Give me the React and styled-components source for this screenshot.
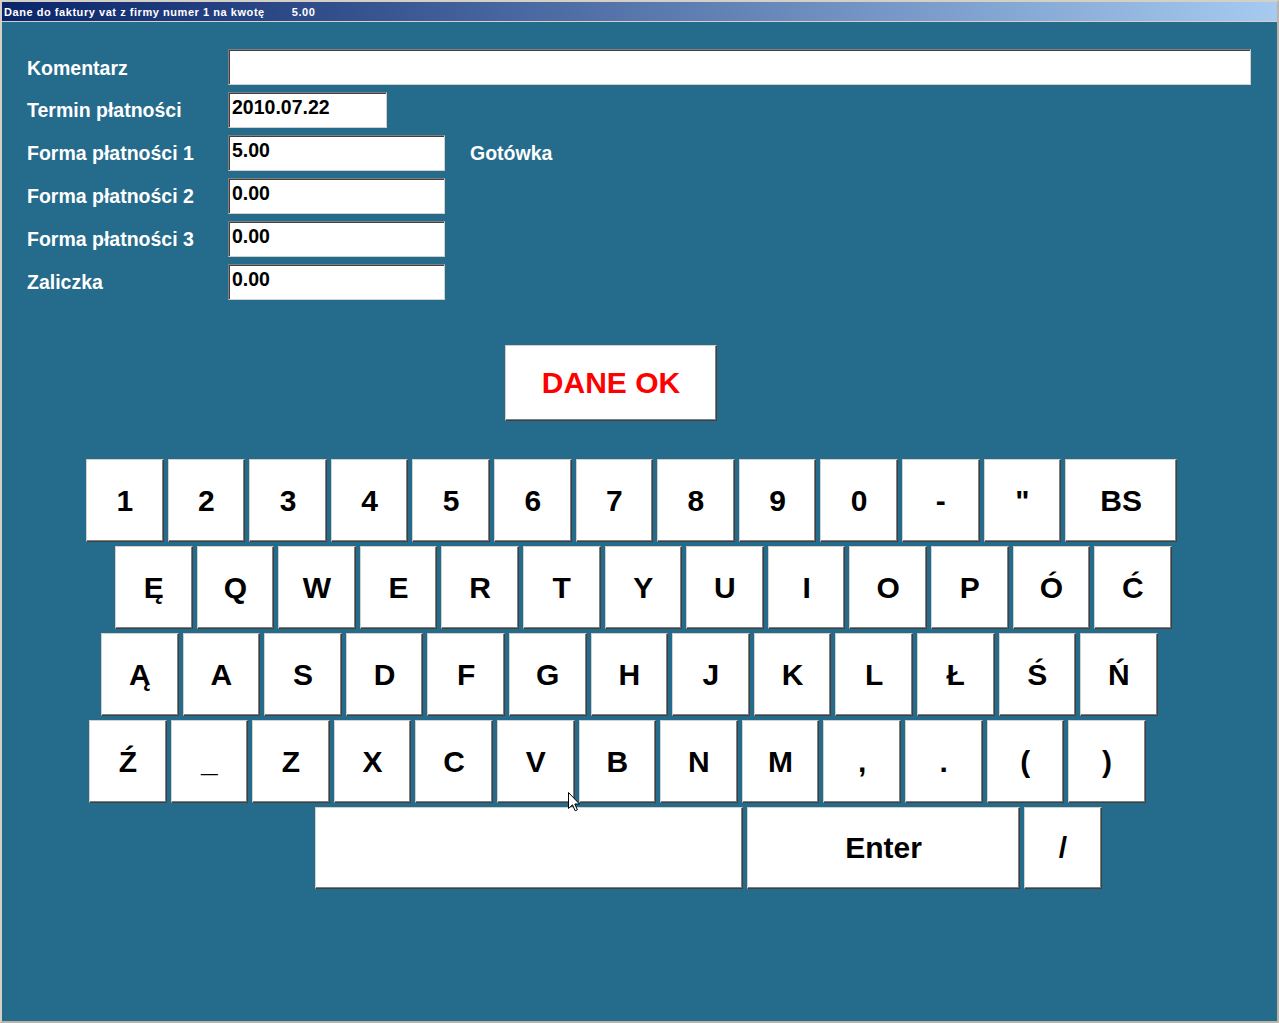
import React from 'react'
import styled, { createGlobalStyle } from 'styled-components'

const GlobalStyle = createGlobalStyle`
  html, body {
    margin: 0;
    padding: 0;
    background: #246b8c;
  }
  * {
    box-sizing: border-box;
  }
`

const rows = [
  { indent: 84, keys: ['1', '2', '3', '4', '5', '6', '7', '8', '9', '0', '-', '"', { label: 'BS', w: 112 }] },
  { indent: 113, keys: ['Ę', 'Q', 'W', 'E', 'R', 'T', 'Y', 'U', 'I', 'O', 'P', 'Ó', 'Ć'] },
  { indent: 99, keys: ['Ą', 'A', 'S', 'D', 'F', 'G', 'H', 'J', 'K', 'L', 'Ł', 'Ś', 'Ń'] },
  { indent: 87, keys: ['Ź', '_', 'Z', 'X', 'C', 'V', 'B', 'N', 'M', ',', '.', '(', ')'] },
  { indent: 313, h: 82, keys: [{ label: '', w: 428 }, { label: 'Enter', w: 273 }, '/'] },
]

const fields = [
  { label: 'Komentarz', value: '', w: 1023, drop: 3 },
  { label: 'Termin płatności', value: '2010.07.22', w: 159 },
  { label: 'Forma płatności 1', value: '5.00', w: 217, note: 'Gotówka' },
  { label: 'Forma płatności 2', value: '0.00', w: 217 },
  { label: 'Forma płatności 3', value: '0.00', w: 217 },
  { label: 'Zaliczka', value: '0.00', w: 217 },
]

function App() {
  return (
    <Window>
      <GlobalStyle />
      <TitleBar>
        <span>Dane do faktury vat z firmy numer 1 na kwotę</span>
        <TitleAmount>5.00</TitleAmount>
      </TitleBar>

      <Content>
        <Form>
          {fields.map((f) => (
            <FormRow key={f.label}>
              <Label $drop={f.drop || 0}>{f.label}</Label>
              <Field $w={f.w}>{f.value}</Field>
              {f.note && <Note>{f.note}</Note>}
            </FormRow>
          ))}
        </Form>

        <OkButton>DANE OK</OkButton>

        <Keyboard>
          {rows.map((row, i) => (
            <KeyRow key={i} $indent={row.indent}>
              {row.keys.map((k, j) => {
                const label = typeof k === 'string' ? k : k.label
                const w = typeof k === 'string' ? 77.6 : k.w
                return (
                  <Key key={j} $w={w} $h={row.h || 83}>
                    {label}
                  </Key>
                )
              })}
            </KeyRow>
          ))}
        </Keyboard>
      </Content>

      <Pointer width="12" height="20" viewBox="0 0 12 20">
        <path
          d="M0.5 0.5 L0.5 16.5 L4.5 12.8 L7.2 18.8 L9.4 17.8 L6.8 12 L11.5 12 Z"
          fill="#fff"
          stroke="#000"
          strokeWidth="1"
          strokeLinejoin="miter"
        />
      </Pointer>
    </Window>
  )
}

export default App

const Window = styled.div`
position: relative;
width: 1279px;
height: 1023px;
display: flex;
flex-direction: column;
background: #246b8c;
border: 2px solid #d4d0c8;
border-right-color: #b8b4ac;
border-bottom-color: #b8b4ac;
font-family: "Liberation Sans", Arial, sans-serif;
overflow: hidden;
`

const TitleBar = styled.div`
height: 20px;
flex: none;
display: flex;
align-items: center;
padding: 1px 0 0 2px;
background: linear-gradient(to right, #0a246a, #a6caf0);
border-bottom: 1px solid #d4d0c8;
color: #fff;
font-size: 11px;
font-weight: bold;
letter-spacing: 0.55px;
white-space: nowrap;
`

const TitleAmount = styled.span`
margin-left: 27px;
`

const Content = styled.div`
flex: 1;
display: flex;
flex-direction: column;
padding-top: 27px;
`

const Form = styled.div`
display: flex;
flex-direction: column;
gap: 7px;
padding-left: 25px;
`

const FormRow = styled.div`
display: flex;
align-items: center;
height: 36px;
`

const Label = styled.div`
width: 201px;
flex: none;
padding-top: ${(p) => p.$drop}px;
color: #fff;
font-size: 19.5px;
font-weight: bold;
white-space: nowrap;
`

const Field = styled.div`
width: ${(p) => p.$w}px;
height: 36px;
flex: none;
background: #fff;
border: 1px solid;
border-color: #808080 #d4d0c8 #d4d0c8 #808080;
box-shadow: inset 1px 1px 0 #404040;
padding: 3px 3px;
color: #000;
font-size: 19.5px;
font-weight: bold;
white-space: nowrap;
`

const Note = styled.div`
margin-left: 25px;
color: #fff;
font-size: 19.5px;
font-weight: bold;
`

const OkButton = styled.div`
align-self: flex-start;
margin: 45px 0 0 503px;
width: 212px;
height: 76px;
display: flex;
align-items: center;
justify-content: center;
background: #fff;
border: 1px solid;
border-color: #d4d0c8 #404040 #404040 #d4d0c8;
box-shadow: inset -1px -1px 0 #808080;
color: #ff0000;
font-size: 30px;
font-weight: bold;
`

const Keyboard = styled.div`
display: flex;
flex-direction: column;
gap: 4px;
margin-top: 38px;
`

const KeyRow = styled.div`
display: flex;
gap: 4px;
padding-left: ${(p) => p.$indent}px;
`

const Key = styled.div`
width: ${(p) => p.$w}px;
height: ${(p) => p.$h}px;
flex: none;
display: flex;
align-items: center;
justify-content: center;
background: #fff;
border: 1px solid;
border-color: #d4d0c8 #404040 #404040 #d4d0c8;
box-shadow: inset -1px -1px 0 #808080;
color: #000;
font-size: 30px;
font-weight: bold;
white-space: pre;
`

const Pointer = styled.svg`
position: absolute;
left: 566px;
top: 790px;
`
